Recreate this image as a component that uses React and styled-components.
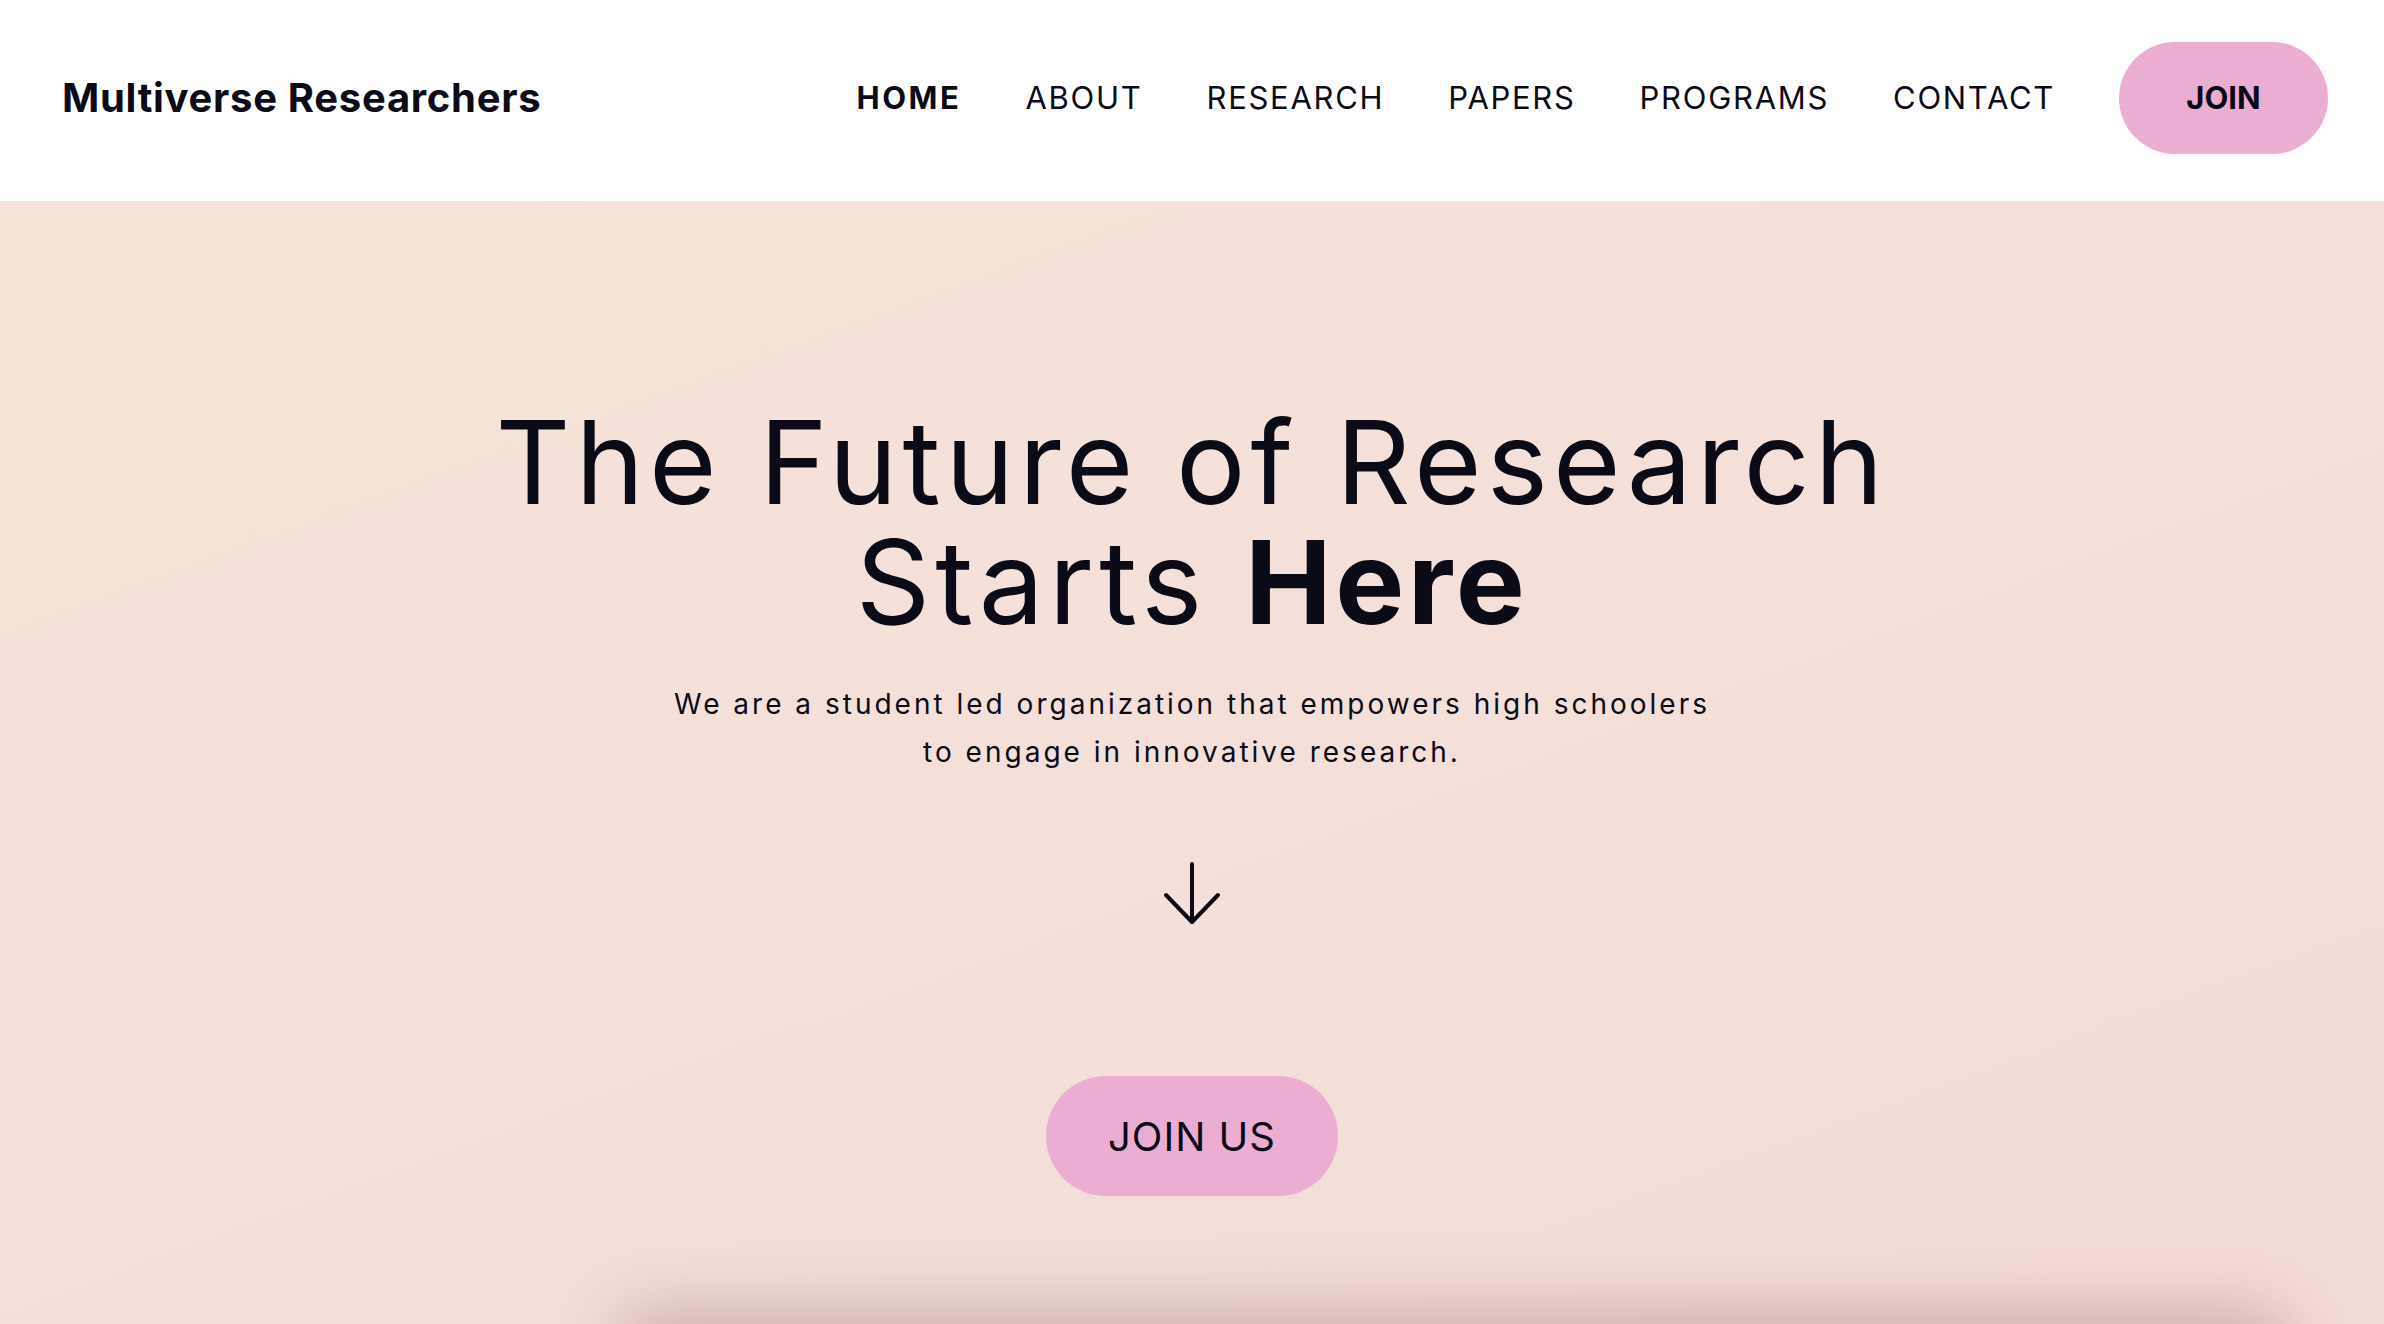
import React from "react";
import styled, { createGlobalStyle } from "styled-components";

const GlobalStyle = createGlobalStyle`
  html, body {
    margin: 0;
    padding: 0;
    background: #ffffff;
  }
  body {
    font-family: "Inter", "Noto Sans", sans-serif;
    color: #0b0b17;
  }
  * {
    box-sizing: border-box;
  }
`;

const Page = styled.div`
  width: 100%;
  overflow: hidden;
`;

const Header = styled.header`
  height: 201px;
  padding: 0 56px 6px 62px;
  display: flex;
  align-items: center;
  justify-content: space-between;
  background: #ffffff;
`;

const Logo = styled.div`
  font-size: 40px;
  font-weight: 700;
  letter-spacing: 0.7px;
`;

const Nav = styled.nav`
  display: flex;
  align-items: center;
  gap: 64px;
`;

const NavLink = styled.a`
  font-size: 31px;
  font-weight: ${({ $active }) => ($active ? 700 : 400)};
  color: #0b0b17;
  text-decoration: none;
  letter-spacing: ${({ $active }) => ($active ? "2.6px" : "1.7px")};
  cursor: pointer;
`;

const JoinButton = styled.button`
  width: 209px;
  height: 112px;
  border: none;
  border-radius: 56px;
  background: #ecadd3;
  color: #0b0b17;
  font-family: inherit;
  font-size: 31px;
  font-weight: 700;
  cursor: pointer;
`;

const Hero = styled.section`
  height: 1123px;
  display: flex;
  flex-direction: column;
  align-items: center;
  padding-top: 201px;
  background: linear-gradient(160deg, #f6e4da 0%, #f4dfd9 55%, #f3dbd8 100%);
`;

const Title = styled.h1`
  margin: 0;
  font-size: 116px;
  font-weight: 400;
  line-height: 120px;
  text-align: center;
  letter-spacing: 5px;
`;

const Strong = styled.span`
  font-weight: 700;
  letter-spacing: 3.5px;
`;

const Subtitle = styled.p`
  margin: 38px 0 0;
  font-size: 28px;
  line-height: 48px;
  text-align: center;
  letter-spacing: 3px;
`;

const ArrowDown = styled.svg`
  margin-top: 86px;
  width: 60px;
  height: 64px;
`;

const CtaButton = styled.button`
  margin-top: 150px;
  width: 292px;
  height: 120px;
  border: none;
  border-radius: 60px;
  background: #ecadd3;
  color: #0b0b17;
  font-family: inherit;
  font-size: 40px;
  font-weight: 400;
  letter-spacing: 1px;
  cursor: pointer;
`;

const Next = styled.section`
  padding: 0 100px 200px 620px;
  background: #f3dbd8;
`;

const Card = styled.div`
  height: 400px;
  border-radius: 24px;
  background: #f3dbd8;
  box-shadow: 0 -10px 70px rgba(120, 80, 70, 0.35);
`;

const navItems = ["ABOUT", "RESEARCH", "PAPERS", "PROGRAMS", "CONTACT"];

export default function App() {
  return (
    <Page>
      <GlobalStyle />
      <Header>
        <Logo>Multiverse Researchers</Logo>
        <Nav>
          <NavLink $active>HOME</NavLink>
          {navItems.map((item) => (
            <NavLink key={item}>{item}</NavLink>
          ))}
          <JoinButton>JOIN</JoinButton>
        </Nav>
      </Header>
      <Hero>
        <Title>
          The Future of Research
          <br />
          Starts <Strong>Here</Strong>
        </Title>
        <Subtitle>
          We are a student led organization that empowers high schoolers
          <br />
          to engage in innovative research.
        </Subtitle>
        <ArrowDown viewBox="0 0 60 64" fill="none" stroke="#0b0b17" strokeWidth="4" strokeLinecap="round" strokeLinejoin="round">
          <path d="M30 2 V60" />
          <path d="M4 33 L30 60 L56 33" />
        </ArrowDown>
        <CtaButton>JOIN US</CtaButton>
      </Hero>
      <Next>
        <Card />
      </Next>
    </Page>
  );
}
